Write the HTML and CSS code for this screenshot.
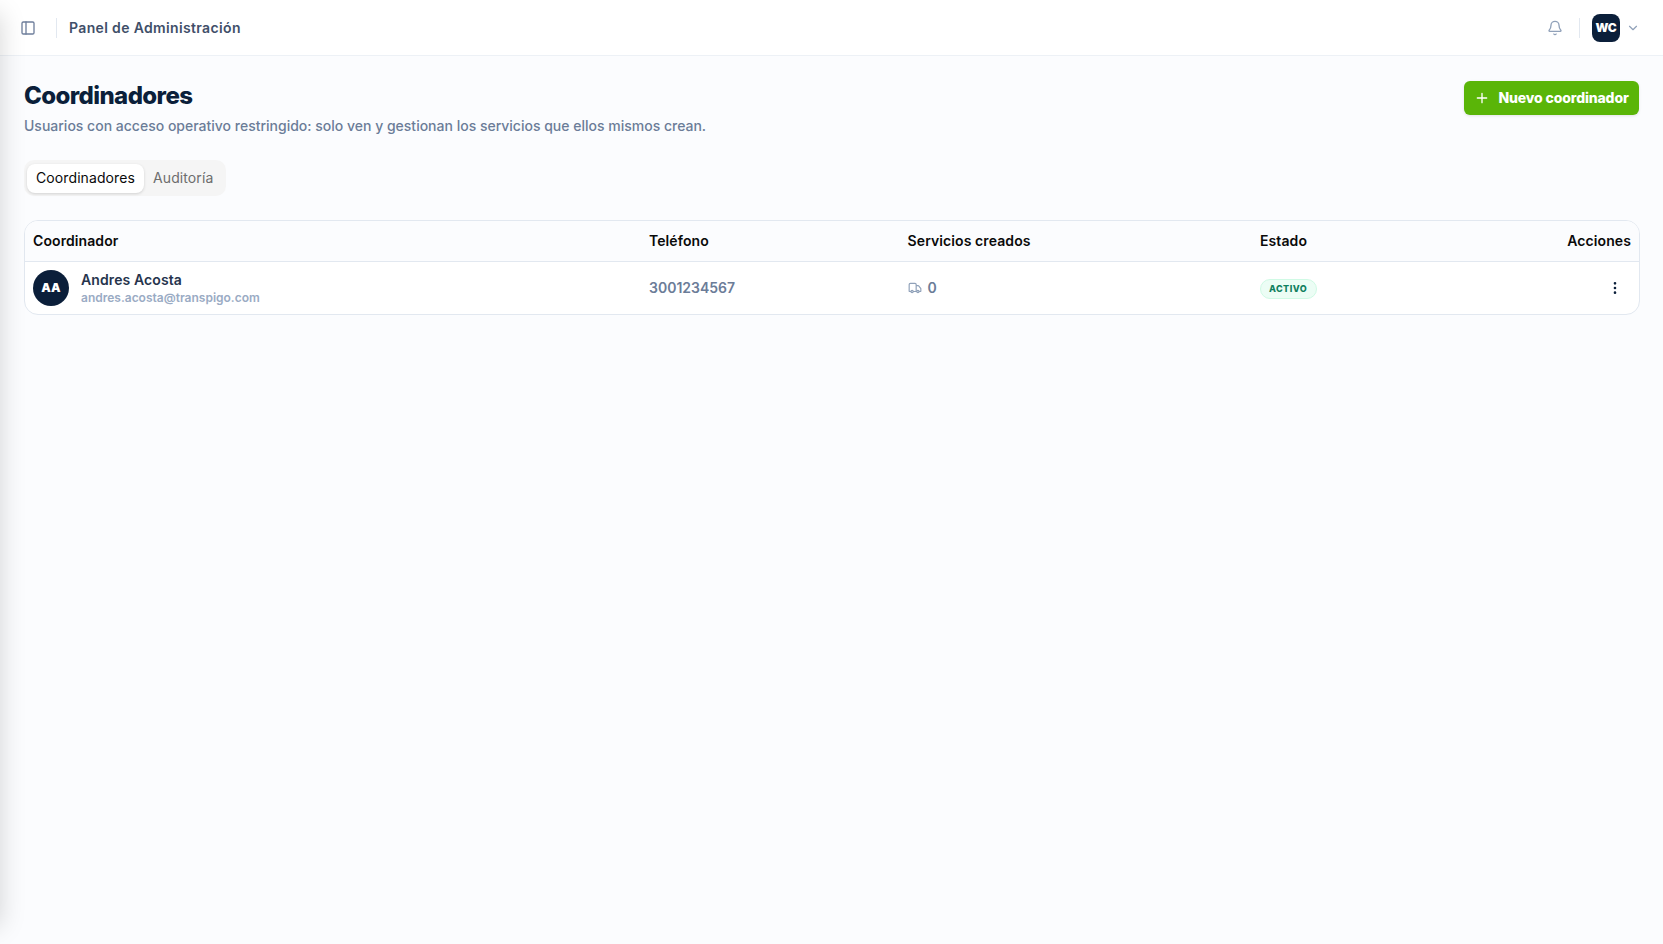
FILE: index.html
```html
<!DOCTYPE html>
<html lang="es"><head><meta charset="utf-8"><title>Panel de Administración</title><link rel="stylesheet" href="styles.css"></head>
<body>
<div class="edge-shadow"></div>
<header class="topbar">
  <div class="group">
    <svg class="icon panel" viewBox="0 0 24 24"><rect width="18" height="18" x="3" y="3" rx="2"/><path d="M9 3v18"/></svg>
    <span class="divider left"></span><span class="crumb">Panel de Administración</span>
  </div>
  <div class="group">
    <svg class="icon bell" viewBox="0 0 24 24"><path d="M10.268 21a2 2 0 0 0 3.464 0"/><path d="M3.262 15.326A1 1 0 0 0 4 17h16a1 1 0 0 0 .74-1.673C19.41 13.956 18 12.499 18 8A6 6 0 0 0 6 8c0 4.499-1.411 5.956-2.738 7.326"/></svg>
    <span class="divider right"></span><span class="account">WC</span>
    <svg class="icon chevron" viewBox="0 0 24 24"><path d="m6 9 6 6 6-6"/></svg>
  </div>
</header>
<main>
  <section class="heading">
    <div><h1>Coordinadores</h1><p>Usuarios con acceso operativo restringido: solo ven y gestionan los servicios que ellos mismos crean.</p></div>
    <button class="primary"><svg class="icon plus" viewBox="0 0 24 24"><path d="M5 12h14M12 5v14"/></svg><span>Nuevo coordinador</span></button>
  </section>
  <nav class="tabs"><button class="tab active">Coordinadores</button><button class="tab">Auditoría</button></nav>
  <section class="card">
    <div class="row head"><span>Coordinador</span><span>Teléfono</span><span>Servicios creados</span><span>Estado</span><span class="end">Acciones</span></div>
    <div class="row body">
      <div class="person"><span class="avatar">AA</span><div><div class="name">Andres Acosta</div><div class="mail">andres.acosta@transpigo.com</div></div></div>
      <div class="phone">3001234567</div>
      <div class="services"><svg class="icon truck" viewBox="0 0 24 24"><path d="M14 18V6a2 2 0 0 0-2-2H4a2 2 0 0 0-2 2v11a1 1 0 0 0 1 1h2M15 18H9M19 18h2a1 1 0 0 0 1-1v-3.65a1 1 0 0 0-.22-.624l-3.48-4.35A1 1 0 0 0 17.52 8H14"/><circle cx="17" cy="18" r="2"/><circle cx="7" cy="18" r="2"/></svg><span>0</span></div>
      <div class="status"><span class="badge">ACTIVO</span></div>
      <div class="end"><svg class="icon dots" viewBox="0 0 24 24"><circle cx="12" cy="12" r="1"/><circle cx="12" cy="5" r="1"/><circle cx="12" cy="19" r="1"/></svg></div>
    </div>
  </section>
</main>
</body></html>
```

FILE: styles.css
```css
*{box-sizing:border-box}
body{margin:0;min-height:944px;background:#fbfcfe;font-family:Inter,sans-serif;font-size:14px;line-height:20px;color:#0a0a0a;overflow:hidden}
button{font:inherit;border:0;background:none}
h1,p{margin:0}
.icon{display:block;flex:none;fill:none;stroke:currentColor;stroke-width:2;stroke-linecap:round;stroke-linejoin:round;width:16px;height:16px}
.edge-shadow{position:fixed;left:-280px;top:14px;bottom:18px;width:280px;box-shadow:0 0 24px rgba(0,0,0,.17);z-index:2}
.topbar{height:56px;background:#fff;border-bottom:1px solid #edf1f6;display:flex;align-items:center;justify-content:space-between;padding:0 23px 0 20px}
.group{display:flex;align-items:center}
.panel{color:#6f7f9c}
.divider{width:1px;height:20px;background:#e2e8f0}
.left{margin:0 12px 0 20px}
.crumb{font-weight:600;letter-spacing:.35px;color:#3f4f69;padding-top:1px}
.bell{color:#90a1b9}
.right{margin:0 12px 0 16px}
.account{display:flex;align-items:center;justify-content:center;width:28px;height:28px;border-radius:8px;background:#0b1f3a;color:#fff;font-size:12px;font-weight:900;letter-spacing:-.3px}
.chevron{width:14px;height:14px;color:#90a1b9;margin-left:6px}
main{padding:24px}
.heading{display:flex;justify-content:space-between;align-items:flex-start}
h1{font-size:24px;line-height:32px;font-weight:800;letter-spacing:-.6px;color:#0b1f3a}
p{margin-top:4px;font-weight:500;color:#6b7c98}
.primary{height:34px;width:175px;margin-top:1px;border-radius:6px;background:#5ab508;color:#fff;font-weight:800;letter-spacing:-.14px;display:flex;align-items:center;padding:0 0 0 10px;gap:8.5px;white-space:nowrap;box-shadow:0 1px 3px rgba(0,0,0,.1)}
.tabs{display:flex;width:max-content;height:36px;margin-top:24px;padding:4px 3px 3px;border-radius:10px;background:#f5f5f5}
.tab{height:29px;padding:0 9px 1px;border-radius:8px;color:#6d6d6d;letter-spacing:.1px}
.tab:last-child{padding-right:10px}
.active{background:#fff;color:#0a0a0a;box-shadow:0 1px 3px rgba(0,0,0,.15)}
.card{margin:24px -1px 0 0;border:1px solid #e2e8f0;border-radius:14px;background:#fff;overflow:hidden}
.row{display:grid;grid-template-columns:616px 258.6px 352.4px 240px 1fr;align-items:center}
.row>*{padding-left:8px;padding-right:8px}
.head{height:41px;background:#fbfcfe;border-bottom:1px solid #e2e8f0;font-weight:600;letter-spacing:.09px}
.body{height:52px}
.end{text-align:right}
.person{display:flex;align-items:center;gap:12px}
.avatar{display:flex;align-items:center;justify-content:center;width:36px;height:36px;border-radius:50%;background:#0b1f3a;color:#fff;font-size:12px;font-weight:900}
.name{padding-bottom:1px;font-weight:600;line-height:18px;letter-spacing:.1px;color:#26344d}
.mail{font-size:12px;font-weight:600;line-height:16px;color:#9aabc4}
.phone{font-weight:600;color:#6b7c98}
.services{display:flex;align-items:center;gap:6px;font-weight:600;color:#6b7c98}
.truck{width:14px;height:14px;color:#90a1b9}
.status{display:flex}
.badge{height:20px;width:57px;margin-top:2px;border:1px solid #d0fae5;border-radius:10px;background:#ecfdf5;color:#10805f;font-size:9px;line-height:17px;font-weight:800;letter-spacing:.45px;padding-left:8px}
.dots{margin:0 8px 0 auto;color:#0b1f3a}
```
